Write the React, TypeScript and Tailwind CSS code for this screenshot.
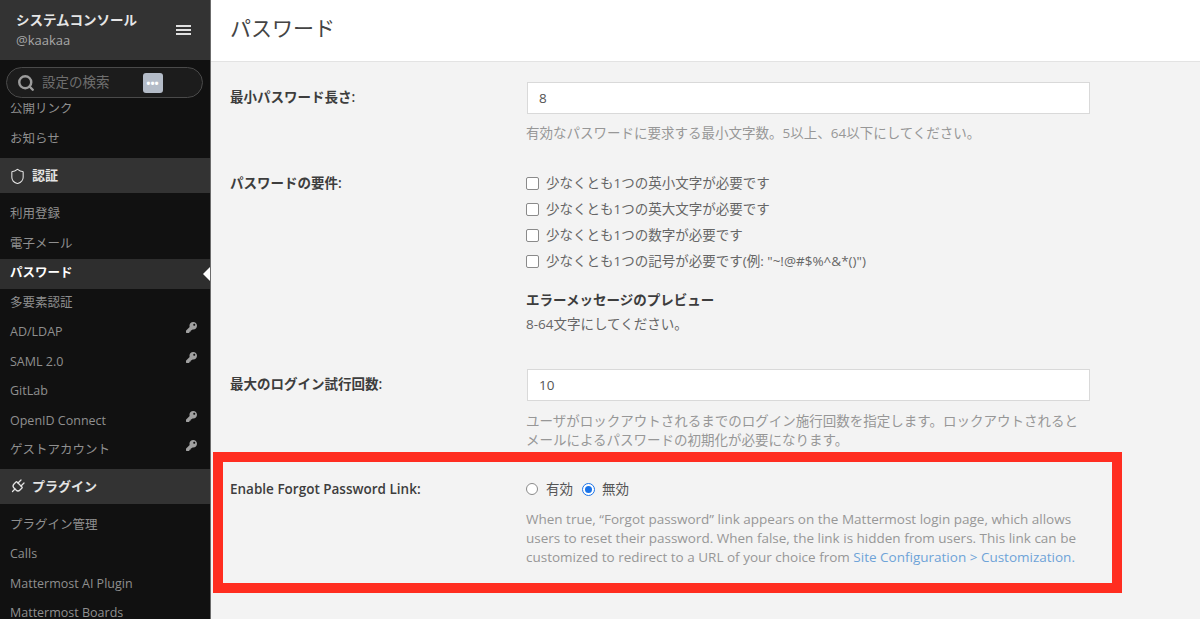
// App.tsx: Mattermost system console, password settings page
import React from 'react';
import { Search, Shield, Plug } from 'lucide-react';
import { FaKey } from 'react-icons/fa';

const fontStack = "font-['Open_Sans','Noto_Sans_CJK_JP',sans-serif]";

interface NavItemProps {
  label: string;
  active?: boolean;
  licensed?: boolean;
}

function NavItem({ label, active, licensed }: NavItemProps) {
  return (
    <div
      className={
        active
          ? 'relative flex h-[29.5px] items-center bg-[#2e2e2e] pl-[10px] text-[12.5px] font-semibold text-white'
          : 'relative flex h-[29.5px] items-center pl-[10px] text-[12.5px] text-[#8f8f8f]'
      }
    >
      {label}
      {licensed && <FaKey size={11} className="absolute right-[13px] top-[4px] text-[#a0a0a0]" />}
      {active && (
        <div className="absolute right-0 top-[8px] h-0 w-0 border-y-[7px] border-r-[7px] border-y-transparent border-r-white" />
      )}
    </div>
  );
}

function NavHeader({ icon, label, className }: { icon: React.ReactNode; label: string; className: string }) {
  return (
    <div className={`mb-[7px] flex h-[35px] items-center gap-[6px] bg-[#333333] pt-[1px] pl-[9px] text-[13px] font-bold text-[#e4e4e4] ${className}`}>
      {icon}
      {label}
    </div>
  );
}

function Sidebar() {
  return (
    <aside className="flex h-[619px] w-[211px] shrink-0 flex-col overflow-hidden border-r border-[#6b6b6b] bg-[#111111]">
      <div className="flex h-[60px] shrink-0 items-center justify-between bg-[#333333] pl-[16px] pr-[19px]">
        <div>
          <div className="text-[13.5px] leading-[20px] font-bold text-[#e6e6e6]">システムコンソール</div>
          <div className="text-[13px] leading-[20px] text-[#a8a8a8]">@kaakaa</div>
        </div>
        <div className="flex w-[15px] flex-col gap-[2px]">
          <div className="h-[2px] bg-[#e0e0e0]" />
          <div className="h-[2px] bg-[#e0e0e0]" />
          <div className="h-[2px] bg-[#e0e0e0]" />
        </div>
      </div>
      <div className="shrink-0 px-[6px] pt-[7px] pb-[5px]">
        <div className="flex h-[31px] w-[197px] items-center rounded-full border border-[#4a4a4a] bg-[#1c1c1c] pl-[10px]">
          <Search size={18} strokeWidth={3.25} className="text-[#9c9c9c]" />
          <span className="ml-[7px] text-[13.5px] text-[#6f6f6f]">設定の検索</span>
          <div className="ml-[33px] flex h-[20px] w-[20px] items-center justify-center rounded-[3px] bg-[#b4bcc8] text-[11px] leading-none font-bold text-white">
            •••
          </div>
        </div>
      </div>
      <div className="min-h-0 flex-1 overflow-hidden">
        <div className="-mt-[8px]">
          <NavItem label="公開リンク" />
          <NavItem label="お知らせ" />
          <NavHeader className="mt-[4px]" icon={<Shield size={17} strokeWidth={1.5} />} label="認証" />
          <NavItem label="利用登録" />
          <NavItem label="電子メール" />
          <NavItem label="パスワード" active />
          <NavItem label="多要素認証" />
          <NavItem label="AD/LDAP" licensed />
          <NavItem label="SAML 2.0" licensed />
          <NavItem label="GitLab" />
          <NavItem label="OpenID Connect" licensed />
          <NavItem label="ゲストアカウント" licensed />
          <NavHeader className="mt-[3px]" icon={<Plug size={17} strokeWidth={1.75} className="rotate-45" />} label="プラグイン" />
          <NavItem label="プラグイン管理" />
          <NavItem label="Calls" />
          <NavItem label="Mattermost AI Plugin" />
          <NavItem label="Mattermost Boards" />
        </div>
      </div>
    </aside>
  );
}

function Label({ children }: { children: React.ReactNode }) {
  return <div className="w-[296px] shrink-0 text-[13.5px] leading-[20px] font-semibold text-[#3d3d3d]">{children}</div>;
}

function Help({ children }: { children: React.ReactNode }) {
  return <div className="text-[13.5px] leading-[19px] text-[#979797]">{children}</div>;
}

function TextField({ value }: { value: string }) {
  return (
    <div className="ml-[1px] flex h-[32px] w-[563px] items-center border border-[#d9d9d9] bg-white pl-[11px] text-[13.5px] text-[#555555]">
      {value}
    </div>
  );
}

function CheckRow({ label }: { label: string }) {
  return (
    <div className="flex h-[26px] items-center gap-[7px] text-[13.5px] text-[#666666]">
      <div className="h-[13px] w-[13px] rounded-[2px] border border-[#8a8a8a] bg-white" />
      {label}
    </div>
  );
}

function PasswordForm() {
  return (
    <div className="px-[19px]">
      <div className="flex pt-[20px]">
        <div className="pt-[5px]">
          <Label>最小パスワード長さ:</Label>
        </div>
        <div>
          <TextField value="8" />
          <div className="mt-[10px]">
            <Help>有効なパスワードに要求する最小文字数。5以上、64以下にしてください。</Help>
          </div>
        </div>
      </div>
      <div className="mt-[27px] flex">
        <div className="pt-[3px]">
          <Label>パスワードの要件:</Label>
        </div>
        <div>
          <CheckRow label="少なくとも1つの英小文字が必要です" />
          <CheckRow label="少なくとも1つの英大文字が必要です" />
          <CheckRow label="少なくとも1つの数字が必要です" />
          <CheckRow label={'少なくとも1つの記号が必要です(例: "~!@#$%^&*()")'} />
          <div className="mt-[16px] text-[13.5px] leading-[20px] font-bold text-[#3d3d3d]">エラーメッセージのプレビュー</div>
          <div className="mt-[4px] text-[13.5px] leading-[20px] text-[#666666]">8-64文字にしてください。</div>
        </div>
      </div>
      <div className="mt-[35px] flex">
        <div className="pt-[5px]">
          <Label>最大のログイン試行回数:</Label>
        </div>
        <div>
          <TextField value="10" />
          <div className="mt-[11px] w-[563px]">
            <Help>ユーザがロックアウトされるまでのログイン施行回数を指定します。ロックアウトされるとメールによるパスワードの初期化が必要になります。</Help>
          </div>
        </div>
      </div>
      <div className="mt-[29px] flex">
        <Label>Enable Forgot Password Link:</Label>
        <div className="w-[563px]">
          <div className="flex h-[20px] items-center text-[13.5px] text-[#555555]">
            <div className="h-[12px] w-[12px] rounded-full border border-[#8a8a8a] bg-white" />
            <span className="ml-[8px]">有効</span>
            <div className="ml-[9px] flex h-[13px] w-[13px] items-center justify-center rounded-full border border-[#1a73e8] bg-white">
              <div className="h-[7px] w-[7px] rounded-full bg-[#1a73e8]" />
            </div>
            <span className="ml-[7px]">無効</span>
          </div>
          <div className="mt-[11px]">
            <Help>
              When true, “Forgot password” link appears on the Mattermost login page, which allows users to reset their password. When false, the link is hidden from users. This link can be customized to redirect to a URL of your choice from{' '}
              <span className="text-[#6ea3d8]">Site Configuration &gt; Customization.</span>
            </Help>
          </div>
        </div>
      </div>
    </div>
  );
}

export default function App() {
  return (
    <div className={`flex h-[619px] w-[1200px] overflow-hidden bg-[#f3f3f3] ${fontStack}`}>
      <Sidebar />
      <main className="relative min-w-0 flex-1">
        <header className="flex h-[62px] items-center border-b border-[#e3e3e3] bg-white pb-[3px] pl-[19px] text-[21px] text-[#444444]">
          パスワード
        </header>
        <PasswordForm />
        {/* 赤枠の注釈 */}
        <div className="absolute left-[2px] top-[452px] h-[141px] w-[909px] border-[10px] border-[#ff2d20]" />
      </main>
    </div>
  );
}
